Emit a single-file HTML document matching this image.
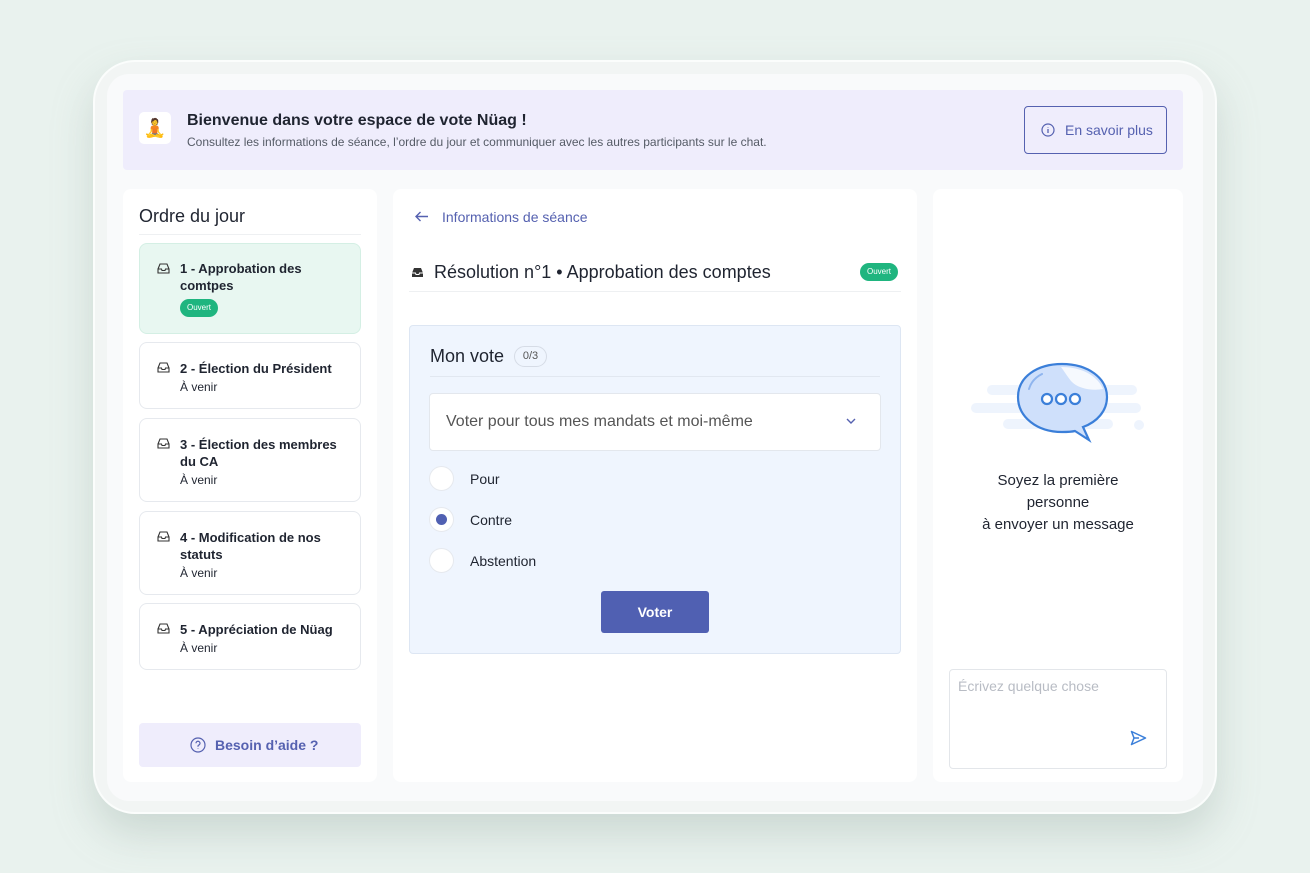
<!DOCTYPE html>
<html><head><meta charset="utf-8"><style>
*{box-sizing:border-box;margin:0;padding:0}
body{width:1310px;height:873px;background:#e9f2ee;font-family:"Liberation Sans",sans-serif;color:#1f2430;position:relative;overflow:hidden}
.bezel{position:absolute;left:93px;top:60px;width:1124px;height:754px;border-radius:42px;background:#f2f5f4;border:2px solid #fbfdfc;box-shadow:0 20px 40px rgba(150,170,160,.35)}
.screen{position:absolute;left:107px;top:74px;width:1096px;height:727px;border-radius:22px;background:#f9fafb}
.abs{position:absolute}
.banner{left:123px;top:90px;width:1060px;height:80px;background:#efedfc;border-radius:4px}
.panel{background:#fff;border-radius:8px;top:189px;height:593px}
.item{position:absolute;left:16px;width:222px;border:1px solid #e6e9ee;border-radius:8px;background:#fff}
.item .t{position:absolute;left:40px;top:17px;font-size:13px;font-weight:bold;line-height:17px;width:175px;color:#1f2430}
.item .s{font-weight:normal;font-size:12px;color:#1f2430;display:block;margin-top:2px}
.item svg{position:absolute;left:17px;top:19px}
.badge{display:inline-block;background:#1fb57f;color:#fff;font-size:8px;border-radius:10px;padding:4px 7px;font-weight:normal;line-height:10px}
.radio{position:absolute;left:429px;width:25px;height:25px;border-radius:50%;background:#fff;border:1px solid #e6e9ee}
.rl{position:absolute;left:470px;font-size:14px}
</style></head><body>
<div class="bezel"></div>
<div class="screen"></div>
<div class="abs banner">
  <div class="abs" style="left:16px;top:22px;width:32px;height:32px;background:#fff;border-radius:5px;font-size:18px;text-align:center;line-height:32px">🧘</div>
  <div class="abs" style="left:64px;top:22px;font-size:16px;font-weight:bold;color:#1f2430">Bienvenue dans votre espace de vote Nüag !</div>
  <div class="abs" style="left:64px;top:45px;font-size:12px;color:#555b66">Consultez les informations de séance, l’ordre du jour et communiquer avec les autres participants sur le chat.</div>
  <div class="abs" style="left:901px;top:16px;width:143px;height:48px;border:1px solid #5561b0;border-radius:4px;color:#5561b0;font-size:14px;line-height:46px;padding-left:40px">En savoir plus
   <svg class="abs" style="left:16px;top:16px" width="14" height="14" viewBox="0 0 14 14"><circle cx="7" cy="7" r="6" fill="none" stroke="#5561b0" stroke-width="1.2"/><path d="M7 6v4M7 4v.5" stroke="#5561b0" stroke-width="1.3"/></svg></div>
</div>

<div class="abs panel" style="left:123px;width:254px">
  <div class="abs" style="left:16px;top:17px;font-size:18px">Ordre du jour</div>
  <div class="abs" style="left:16px;top:45px;width:222px;height:1px;background:#eef0f2"></div>
  <div class="item" style="top:54px;height:91px;background:#e8f7f1;border-color:#d4efe4"><svg width="13" height="11" viewBox="0 0 13 11"><path d="M1 6L3 1h7l2 5v4H1zM1 6h3.5l.5 1.5h3L8.5 6H12" fill="none" stroke="#333" stroke-width="1.1"/></svg><div class="t" style="top:16px">1 - Approbation des comtpes<br><span class="badge" style="margin-top:5px">Ouvert</span></div></div>
  <div class="item" style="top:153px;height:67px"><svg width="13" height="11" viewBox="0 0 13 11"><path d="M1 6L3 1h7l2 5v4H1zM1 6h3.5l.5 1.5h3L8.5 6H12" fill="none" stroke="#333" stroke-width="1.1"/></svg><div class="t">2 - Élection du Président<span class="s">À venir</span></div></div>
  <div class="item" style="top:229px;height:84px"><svg width="13" height="11" viewBox="0 0 13 11"><path d="M1 6L3 1h7l2 5v4H1zM1 6h3.5l.5 1.5h3L8.5 6H12" fill="none" stroke="#333" stroke-width="1.1"/></svg><div class="t">3 - Élection des membres du CA<span class="s">À venir</span></div></div>
  <div class="item" style="top:322px;height:84px"><svg width="13" height="11" viewBox="0 0 13 11"><path d="M1 6L3 1h7l2 5v4H1zM1 6h3.5l.5 1.5h3L8.5 6H12" fill="none" stroke="#333" stroke-width="1.1"/></svg><div class="t">4 - Modification de nos statuts<span class="s">À venir</span></div></div>
  <div class="item" style="top:414px;height:67px"><svg width="13" height="11" viewBox="0 0 13 11"><path d="M1 6L3 1h7l2 5v4H1zM1 6h3.5l.5 1.5h3L8.5 6H12" fill="none" stroke="#333" stroke-width="1.1"/></svg><div class="t">5 - Appréciation de Nüag<span class="s">À venir</span></div></div>
  <div class="abs" style="left:16px;top:534px;width:222px;height:44px;background:#efedfc;border-radius:4px;color:#5561b0;font-size:14px;font-weight:bold;line-height:44px;padding-left:76px">Besoin d’aide ?
   <svg class="abs" style="left:51px;top:14px" width="16" height="16" viewBox="0 0 16 16"><circle cx="8" cy="8" r="7" fill="none" stroke="#5561b0" stroke-width="1.2"/><path d="M6 6.3a2 2 0 1 1 2.5 1.9c-.4.2-.5.5-.5 1v.6M8 11.3v.5" fill="none" stroke="#5561b0" stroke-width="1.2"/></svg></div>
</div>

<div class="abs panel" style="left:393px;width:524px">
  <svg class="abs" style="left:22px;top:22px" width="14" height="11" viewBox="0 0 14 11"><path d="M13 5.5H1M5.5 1L1 5.5 5.5 10" fill="none" stroke="#5561b0" stroke-width="1.4"/></svg>
  <div class="abs" style="left:49px;top:20px;font-size:14px;color:#5561b0">Informations de séance</div>
  <svg class="abs" style="left:18px;top:78px" width="13" height="11" viewBox="0 0 13 11"><path d="M1 6L3 1h7l2 5v4H1z" fill="#333"/><path d="M1 6h3.5l.5 1.5h3L8.5 6H12" fill="none" stroke="#fff" stroke-width="1"/></svg>
  <div class="abs" style="left:41px;top:73px;font-size:18px">Résolution n°1 • Approbation des comptes</div>
  <span class="abs badge" style="left:467px;top:74px">Ouvert</span>
  <div class="abs" style="left:16px;top:102px;width:492px;height:1px;background:#eef0f2"></div>
  <div class="abs" style="left:16px;top:136px;width:492px;height:329px;background:#eff5fe;border:1px solid #dde6f3;border-radius:4px">
    <div class="abs" style="left:20px;top:20px;font-size:18px">Mon vote</div>
    <div class="abs" style="left:104px;top:20px;width:33px;height:21px;border:1px solid #d6dce6;border-radius:11px;font-size:11px;color:#555;text-align:center;line-height:19px">0/3</div>
    <div class="abs" style="left:20px;top:50px;width:450px;height:1px;background:#e1e7f0"></div>
    <div class="abs" style="left:19px;top:67px;width:452px;height:58px;background:#fff;border:1px solid #e3e7ed;border-radius:4px;font-size:16px;color:#555;line-height:56px;padding-left:16px">Voter pour tous mes mandats et moi-même
      <svg class="abs" style="left:416px;top:24px" width="10" height="7" viewBox="0 0 10 7"><path d="M1 1l4 4 4-4" fill="none" stroke="#5561b0" stroke-width="1.4"/></svg></div>
  </div>
</div>
<div class="radio" style="top:466px"></div><div class="rl" style="top:471px">Pour</div>
<div class="radio" style="top:507px"><div style="position:absolute;left:6px;top:6px;width:11px;height:11px;border-radius:50%;background:#5060b2"></div></div><div class="rl" style="top:512px">Contre</div>
<div class="radio" style="top:548px"></div><div class="rl" style="top:553px">Abstention</div>
<div class="abs" style="left:601px;top:591px;width:108px;height:42px;background:#5060b2;border-radius:3px;color:#fff;font-size:14px;font-weight:bold;text-align:center;line-height:42px">Voter</div>

<div class="abs panel" style="left:933px;width:250px">
  <svg class="abs" style="left:36px;top:170px" width="180" height="90" viewBox="0 0 180 90">
    <g fill="#eef4fd"><rect x="18" y="26" width="150" height="10" rx="5"/><rect x="2" y="44" width="170" height="10" rx="5"/><rect x="34" y="60" width="110" height="10" rx="5"/><circle cx="170" cy="66" r="5"/></g>
    <path d="M93 5c26 0 45 14 45 33 0 14-10 25-24 30l6 13-14-9c-4 1-9 1-13 1-25 0-44-15-44-35S68 5 93 5z" fill="#cfe0fb" stroke="#3b7fd9" stroke-width="2.2"/>
    <path d="M92 8c20 0 36 8 42 22-10 2-25 0-32-8-4-5-7-10-10-14z" fill="#fff" opacity=".8"/>
    <path d="M60 30c2-7 7-12 13-15" fill="none" stroke="#8fb5ee" stroke-width="2" stroke-linecap="round"/>
    <g fill="#fff" stroke="#3b7fd9" stroke-width="2.2"><circle cx="78" cy="40" r="5"/><circle cx="92" cy="40" r="5"/><circle cx="106" cy="40" r="5"/></g>
  </svg>
  <div class="abs" style="left:0;top:281px;width:250px;text-align:center;font-size:15px;line-height:22px">Soyez la première<br>personne<br>à envoyer un message</div>
  <div class="abs" style="left:16px;top:480px;width:218px;height:100px;border:1px solid #e3e6ea;border-radius:4px">
    <div class="abs" style="left:8px;top:8px;font-size:14px;color:#b8bcc4">Écrivez quelque chose</div>
    <svg class="abs" style="left:180px;top:60px" width="17" height="16" viewBox="0 0 17 16"><path d="M1.5 1.5L15.5 8 1.5 14.5 4 8z M4 8h5" fill="none" stroke="#3b7fd9" stroke-width="1.5" stroke-linejoin="round"/></svg>
  </div>
</div>
</body></html>
